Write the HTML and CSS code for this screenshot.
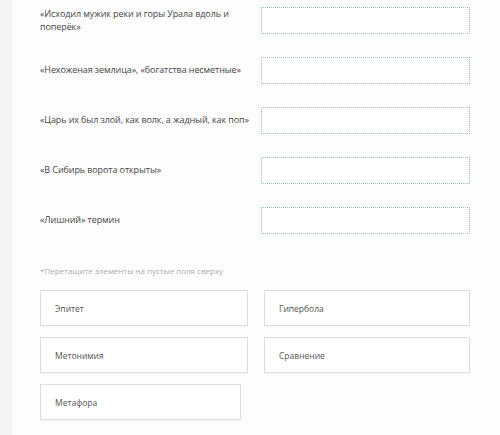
FILE: index.html
```html
<!DOCTYPE html>
<html lang="ru">
<head>
<meta charset="utf-8">
<link rel="stylesheet" href="styles.css">
</head>
<body>
<div class="page">
  <div class="strip"></div>
  <div class="panel">
    <div class="pairs">
      <div class="label">«Исходил мужик реки и горы Урала вдоль и поперёк»</div>
      <div class="drop"></div>
      <div class="label">«Нехоженая землица», «богатства несметные»</div>
      <div class="drop"></div>
      <div class="label">«Царь их был злой, как волк, а жадный, как поп»</div>
      <div class="drop"></div>
      <div class="label">«В Сибирь ворота открыты»</div>
      <div class="drop"></div>
      <div class="label">«Лишний» термин</div>
      <div class="drop"></div>
    </div>
    <div class="hint">*Перетащите элементы на пустые поля сверху</div>
    <div class="cards">
      <div class="card">Эпитет</div>
      <div class="card">Гипербола</div>
      <div class="card">Метонимия</div>
      <div class="card">Сравнение</div>
      <div class="card card-narrow">Метафора</div>
    </div>
  </div>
</div>
</body>
</html>
```
FILE: styles.css
```css
html, body {
  margin: 0;
  padding: 0;
  background: #fdfdfd;
}
body {
  font-family: "Open Sans", "Noto Sans", sans-serif;
  color: #474747;
}
.page {
  display: flex;
  min-height: 435px;
}
.strip {
  width: 12px;
  flex: none;
  background: #f3f3f3;
}
.panel {
  flex: 1;
  padding: 7px 0 0 28px;
}
.pairs {
  display: grid;
  grid-template-columns: 221px 209px;
  grid-auto-rows: 27px;
  row-gap: 23px;
  align-items: center;
}
.label {
  font-size: 9px;
  line-height: 12.5px;
  padding-right: 8px;
  letter-spacing: -0.1px;
}
.drop {
  height: 100%;
  box-sizing: border-box;
  border: 1px dotted #98c0c0;
  background: #fff;
}
.hint {
  margin-top: 32px;
  font-size: 8px;
  line-height: 10px;
  color: #acacac;
}
.cards {
  margin-top: 14px;
  display: grid;
  grid-template-columns: 208px 206px;
  grid-auto-rows: 36px;
  column-gap: 16px;
  row-gap: 11px;
}
.card {
  display: flex;
  align-items: center;
  padding-left: 14px;
  box-sizing: border-box;
  border: 1px solid #dedede;
  background: #fff;
  font-size: 8.5px;
  color: #555;
  box-shadow: 0 1px 1px rgba(0,0,0,0.03);
}
.card-narrow {
  width: 201px;
}
```
